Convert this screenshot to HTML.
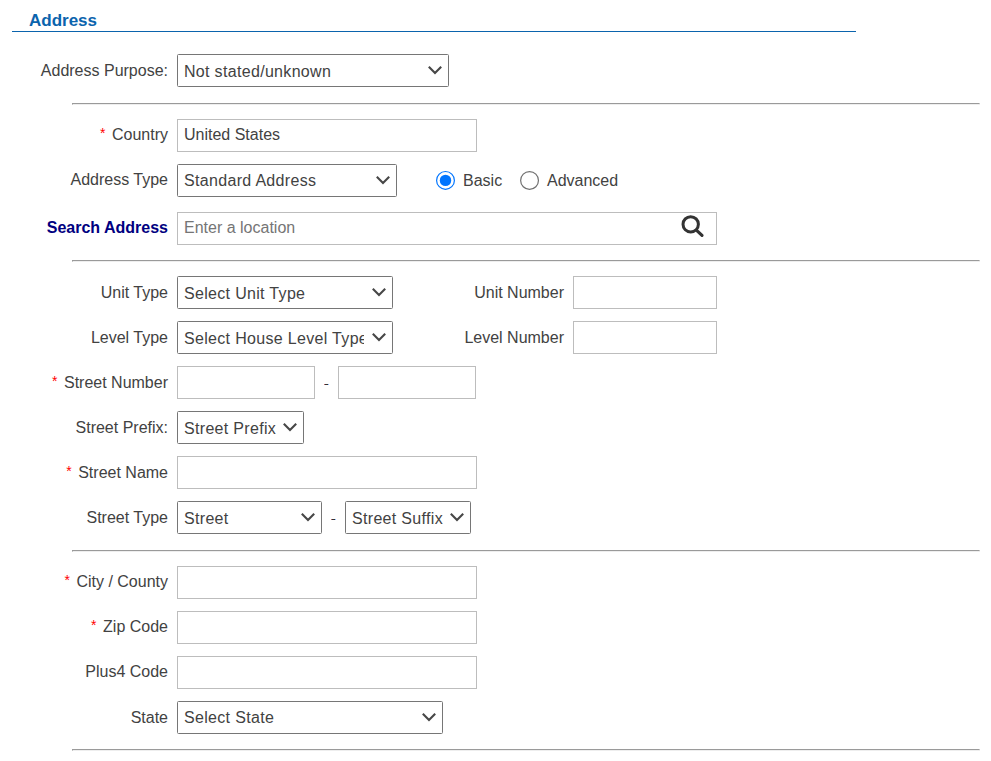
<!DOCTYPE html>
<html><head><meta charset="utf-8">
<style>
html,body{margin:0;padding:0;background:#fff;width:991px;height:761px;overflow:hidden;}
body{position:relative;font-family:"Liberation Sans",sans-serif;font-size:16px;color:#424242;}
.a{position:absolute;white-space:nowrap;line-height:18px;}
.hdr{left:29px;top:12px;font-weight:bold;color:#0b64ad;font-size:17px;}
.hline{position:absolute;left:12px;top:31px;width:844px;height:1px;background:#0b64ad;}
.hr{position:absolute;left:72px;width:906px;height:0;margin:0;border-style:solid;border-width:1px;border-color:#9a9a9a #eeeeee #eeeeee #9a9a9a;}
.lbl{position:absolute;right:823px;white-space:nowrap;line-height:18px;text-align:right;}
.req{color:#ff0000;display:inline-block;width:12px;text-align:left;font-size:14px;line-height:18px;vertical-align:top;position:relative;top:-2px;}
.sel{position:absolute;box-sizing:border-box;height:33px;border:1px solid #767676;border-radius:1.5px;background:#fff;overflow:hidden;}
.sel .t{position:absolute;left:6px;top:8px;line-height:18px;color:#424242;letter-spacing:0.32px;white-space:nowrap;}
.sel svg{position:absolute;top:0;}
.inp{position:absolute;box-sizing:border-box;height:33px;border:1px solid #bdbdbd;background:#fff;}
.inp .t{position:absolute;left:6px;top:6px;line-height:18px;color:#424242;white-space:nowrap;}
.dash{position:absolute;height:1px;width:5px;background:linear-gradient(90deg,#b66 0 1px,#333 1px 4px,#8bf 4px 5px);}
</style></head><body>
<div class="a hdr">Address</div>
<div class="hline"></div>

<!-- section 1 -->
<div class="lbl" style="top:62px">Address Purpose:</div>
<div class="sel" style="left:177px;top:54px;width:272px"><div class="t">Not stated/unknown</div>
<svg style="right:6px;top:10px" width="14" height="10" viewBox="0 0 14 10"><path d="M0.8 1.8 L7 8 L13.2 1.8" fill="none" stroke="#474747" stroke-width="2.1"/></svg></div>

<div class="hr" style="top:103px"></div>

<div class="lbl" style="top:126px"><span class="req">*</span>Country</div>
<div class="inp" style="left:177px;top:119px;width:300px"><div class="t">United States</div></div>

<div class="lbl" style="top:171px">Address Type</div>
<div class="sel" style="left:177px;top:164px;width:220px"><div class="t" style="top:7px">Standard Address</div>
<svg style="right:6px;top:10px" width="14" height="10" viewBox="0 0 14 10"><path d="M0.8 1.8 L7 8 L13.2 1.8" fill="none" stroke="#474747" stroke-width="2.1"/></svg></div>

<svg style="position:absolute;left:435px;top:170px" width="21" height="21" viewBox="0 0 21 21"><circle cx="10.5" cy="10.4" r="8.9" fill="#fff" stroke="#0075ff" stroke-width="1.2"/><circle cx="10.5" cy="10.4" r="5.7" fill="#0075ff"/></svg>
<div class="a" style="left:463px;top:172px">Basic</div>
<svg style="position:absolute;left:519px;top:170px" width="21" height="21" viewBox="0 0 21 21"><circle cx="10.55" cy="10.45" r="8.9" fill="#fff" stroke="#707070" stroke-width="1.2"/></svg>
<div class="a" style="left:547px;top:172px">Advanced</div>

<div class="lbl" style="top:219px;font-weight:bold;color:#000080">Search Address</div>
<div class="inp" style="left:177px;top:212px;width:540px"><div class="t" style="color:#757575">Enter a location</div>
<svg style="position:absolute;left:500px;top:-1px" width="30" height="30" viewBox="0 0 30 30"><circle cx="12.7" cy="12.35" r="7.7" fill="none" stroke="#333" stroke-width="3"/><path d="M18.6 18.3 L24 23.3" stroke="#333" stroke-width="3.2" stroke-linecap="round"/></svg></div>

<div class="hr" style="top:260px"></div>

<div class="lbl" style="top:284px">Unit Type</div>
<div class="sel" style="left:177px;top:276px;width:216px"><div class="t">Select Unit Type</div><svg style="right:6px;top:10px" width="14" height="10" viewBox="0 0 14 10"><path d="M0.8 1.8 L7 8 L13.2 1.8" fill="none" stroke="#474747" stroke-width="2.1"/></svg></div>
<div class="a" style="right:427px;top:284px">Unit Number</div>
<div class="inp" style="left:573px;top:276px;width:144px"></div>
<div class="lbl" style="top:329px">Level Type</div>
<div class="sel" style="left:177px;top:321px;width:216px"><div class="t" style="width:180px;overflow:hidden">Select House Level Type</div><svg style="right:6px;top:10px" width="14" height="10" viewBox="0 0 14 10"><path d="M0.8 1.8 L7 8 L13.2 1.8" fill="none" stroke="#474747" stroke-width="2.1"/></svg></div>
<div class="a" style="right:427px;top:329px">Level Number</div>
<div class="inp" style="left:573px;top:321px;width:144px"></div>
<div class="lbl" style="top:374px"><span class="req">*</span>Street Number</div>
<div class="inp" style="left:177px;top:366px;width:138px"></div>
<div class="dash" style="left:324px;top:384px"></div>
<div class="inp" style="left:338px;top:366px;width:138px"></div>
<div class="lbl" style="top:419px">Street Prefix:</div>
<div class="sel" style="left:177px;top:411px;width:127px"><div class="t">Street Prefix</div><svg style="right:6px;top:10px" width="14" height="10" viewBox="0 0 14 10"><path d="M0.8 1.8 L7 8 L13.2 1.8" fill="none" stroke="#474747" stroke-width="2.1"/></svg></div>
<div class="lbl" style="top:464px"><span class="req">*</span>Street Name</div>
<div class="inp" style="left:177px;top:456px;width:300px"></div>
<div class="lbl" style="top:509px">Street Type</div>
<div class="sel" style="left:177px;top:501px;width:145px"><div class="t">Street</div><svg style="right:6px;top:10px" width="14" height="10" viewBox="0 0 14 10"><path d="M0.8 1.8 L7 8 L13.2 1.8" fill="none" stroke="#474747" stroke-width="2.1"/></svg></div>
<div class="dash" style="left:331px;top:519px"></div>
<div class="sel" style="left:345px;top:501px;width:126px"><div class="t">Street Suffix</div><svg style="right:6px;top:10px" width="14" height="10" viewBox="0 0 14 10"><path d="M0.8 1.8 L7 8 L13.2 1.8" fill="none" stroke="#474747" stroke-width="2.1"/></svg></div>
<div class="hr" style="top:550px"></div>
<div class="lbl" style="top:573px"><span class="req">*</span>City / County</div>
<div class="inp" style="left:177px;top:566px;width:300px"></div>
<div class="lbl" style="top:618px"><span class="req">*</span>Zip Code</div>
<div class="inp" style="left:177px;top:611px;width:300px"></div>
<div class="lbl" style="top:663px">Plus4 Code</div>
<div class="inp" style="left:177px;top:656px;width:300px"></div>
<div class="lbl" style="top:709px">State</div>
<div class="sel" style="left:177px;top:701px;width:266px"><div class="t" style="top:7px">Select State</div><svg style="right:6px;top:10px" width="14" height="10" viewBox="0 0 14 10"><path d="M0.8 1.8 L7 8 L13.2 1.8" fill="none" stroke="#474747" stroke-width="2.1"/></svg></div>
<div class="hr" style="top:749px"></div>
</body></html>
